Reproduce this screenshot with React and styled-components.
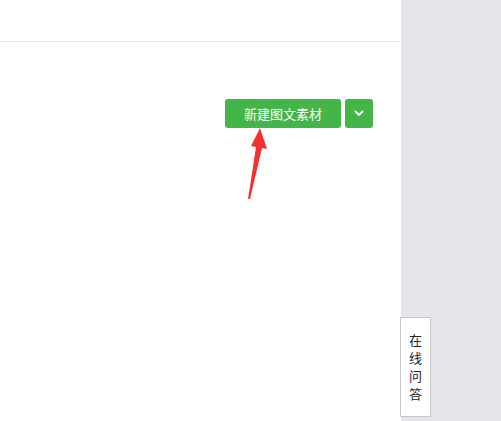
import React from "react";
import styled, { createGlobalStyle } from "styled-components";

const Global = createGlobalStyle`
  html, body { margin: 0; padding: 0; height: 100%; }
  body { font-family: "Microsoft YaHei", "Noto Sans CJK SC", "Noto Sans", sans-serif; background: #fff; overflow: hidden; }
  #root { height: 100%; }
`;

const Page = styled.div`
  display: flex;
  height: 421px;
  width: 501px;
`;

const Main = styled.div`
  position: relative;
  width: 401px;
  background: #fff;
  display: flex;
  flex-direction: column;
`;

const Header = styled.div`
  height: 42px;
  border-bottom: 1px solid #e4e4e4;
  box-sizing: border-box;
`;

const Toolbar = styled.div`
  display: flex;
  justify-content: flex-end;
  gap: 4px;
  margin-top: 57px;
  padding-right: 28px;
`;

const GreenButton = styled.button`
  height: 29px;
  width: ${(p) => p.$w}px;
  background: #44b549;
  border: none;
  border-radius: 3px;
  color: #fff;
  font-family: inherit;
  font-size: 13px;
  padding: 0;
  display: flex;
  align-items: center;
  justify-content: center;
  cursor: pointer;
`;

const Arrow = styled.svg`
  position: absolute;
  left: 244px;
  top: 127px;
`;

const Sidebar = styled.div`
  flex: 1;
  background: #e5e6eb;
  position: relative;
`;

const Consult = styled.div`
  position: absolute;
  left: -1px;
  top: 317px;
  width: 31px;
  height: 100px;
  box-sizing: border-box;
  background: #fff;
  border: 1px solid #c8c8c8;
  display: flex;
  flex-direction: column;
  align-items: center;
  justify-content: center;
  font-size: 13px;
  color: #222;
`;

const Char = styled.span`
  display: block;
  line-height: 18px;
  height: 18px;
`;

export default function App() {
  return (
    <>
      <Global />
      <Page>
        <Main>
          <Header />
          <Toolbar>
            <GreenButton $w={116}>新建图文素材</GreenButton>
            <GreenButton $w={28}>
              <svg width="10" height="7" viewBox="0 0 10 7">
                <path d="M1.5 1.5 L5 5 L8.5 1.5" fill="none" stroke="#fff" strokeWidth="1.8" strokeLinecap="round" strokeLinejoin="round" />
              </svg>
            </GreenButton>
          </Toolbar>
          <Arrow width="24" height="74" viewBox="0 0 24 74">
            <path d="M16 1 L23 22 L18 21 L6 72 L4 72 L12 20 L7 19 Z" fill="#f5312f" />
          </Arrow>
        </Main>
        <Sidebar>
          <Consult>
            <Char>在</Char>
            <Char>线</Char>
            <Char>问</Char>
            <Char>答</Char>
          </Consult>
        </Sidebar>
      </Page>
    </>
  );
}
